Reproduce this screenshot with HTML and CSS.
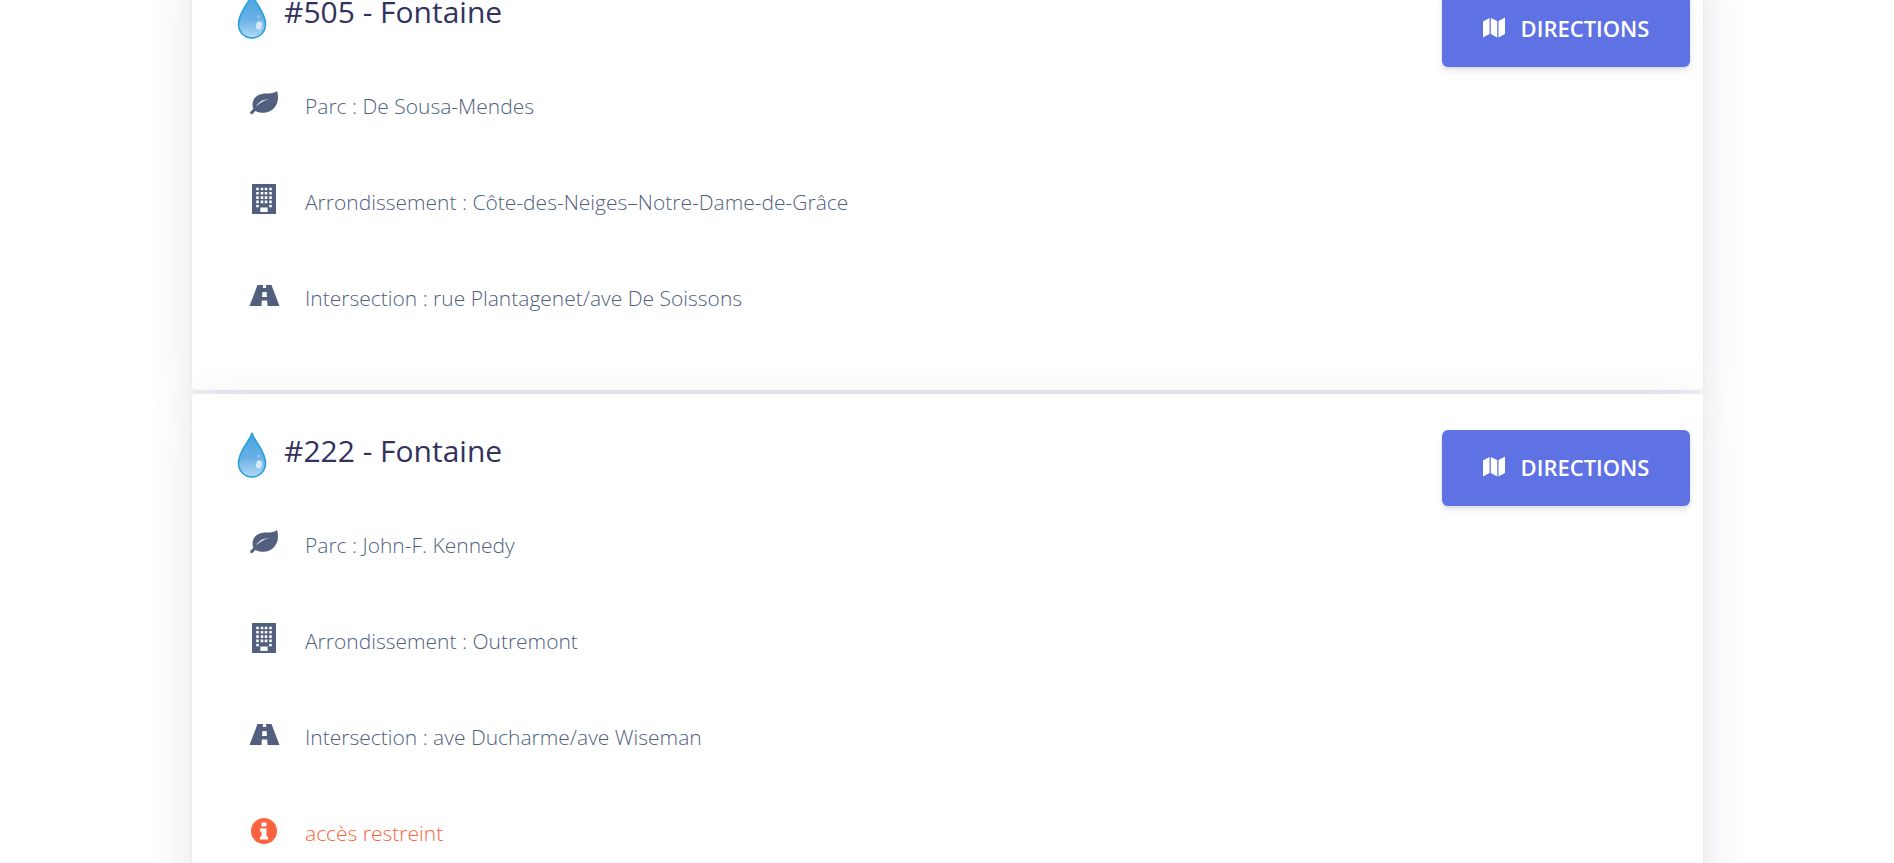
FILE: index.html
```html
<!DOCTYPE html>
<html lang="fr">
<head>
    <meta charset="UTF-8">
    <meta name="viewport" content="width=device-width, initial-scale=1.0">
    <title>Fontaines</title>
    <link rel="stylesheet" href="styles.css">
</head>
<body>
    <svg class="sprites" width="0" height="0">
        <defs>
            <linearGradient id="dropFill" x1="0" y1="0" x2="0" y2="1">
                <stop offset="0" stop-color="#4aa3df"/>
                <stop offset="0.55" stop-color="#66b0e6"/>
                <stop offset="1" stop-color="#b5d8f3"/>
            </linearGradient>
            <symbol id="icon-drop" viewBox="0 0 30 46">
                <path d="M15 1C13 9 1.500 19 1.500 31C1.500 39 7.500 45 15 45C22.500 45 28.500 39 28.500 31C28.500 19 17 9 15 1Z" fill="url(#dropFill)" stroke="#27a0dc" stroke-width="1.600"/>
                <ellipse cx="22" cy="32.500" rx="3" ry="4.200" fill="#d4e9f8" transform="rotate(15 22 32.500)"/>
                <circle cx="21.500" cy="24" r="1.700" fill="#8cc3ec"/>
            </symbol>
            <symbol id="icon-leaf" viewBox="0 0 28 24">
                <path fill-rule="evenodd" d="M27 0C25 2 21 2.500 16 2.500C8 2.500 2.500 7 2.500 13.500C2.500 15.200 2.800 16.500 3.400 17.800L0.500 20.800C-0.600 22.200 1 23.900 2.400 22.900L5.500 20C7.500 21.200 10 21.800 13 21.800C22.500 21.800 28 14.500 28 6.500C28 4 27.600 2 27 0ZM6.200 15.500C8.500 10.800 13 8.300 19.500 8C14.500 9.200 10 11.500 6.200 15.500Z"/>
            </symbol>
            <symbol id="icon-building" viewBox="0 0 24 30">
                <path fill-rule="evenodd" d="M0 0H24V30H0ZM4.200 3.700h2.600v2.600h-2.600zM8.700 3.700h2.600v2.600h-2.600zM12.700 3.700h2.600v2.600h-2.600zM17.200 3.700h2.600v2.600h-2.600zM4.200 8h2.600v2.600h-2.600zM8.700 8h2.600v2.600h-2.600zM12.700 8h2.600v2.600h-2.600zM17.200 8h2.600v2.600h-2.600zM4.200 12.300h2.600v2.600h-2.600zM8.700 12.300h2.600v2.600h-2.600zM12.700 12.300h2.600v2.600h-2.600zM17.200 12.300h2.600v2.600h-2.600zM4.200 16.600h2.600v2.600h-2.600zM8.700 16.600h2.600v2.600h-2.600zM12.700 16.600h2.600v2.600h-2.600zM17.200 16.600h2.600v2.600h-2.600zM4.200 20.900h2.600v2.400h-2.600zM17.200 20.900h2.600v2.400h-2.600zM8.300 23.500h7.400v4.500h-7.400z"/>
            </symbol>
            <symbol id="icon-road" viewBox="0 0 30 21">
                <path fill-rule="evenodd" d="M8 0H13.500L13.300 3H16.700L16.500 0H22L30 21H18L17.700 15.500H12.300L12 21H0ZM12.900 7L12.600 12H17.400L17.100 7Z"/>
            </symbol>
            <symbol id="icon-info" viewBox="0 0 26 26">
                <path fill-rule="evenodd" d="M13 0A13 13 0 1 1 13 26A13 13 0 1 1 13 0ZM10.500 4.500V8.500H15.500V4.500ZM9 10.500V13.500H10.500V18.500H9V21.500H17V18.500H15.500V10.500Z"/>
            </symbol>
            <symbol id="icon-map" viewBox="0 0 22 21">
                <path d="M0 4.500L6.500 1V17L0 20.500ZM7.800 1L14.200 4V20.500L7.800 17ZM15.500 4L22 0.500V17L15.500 20.500Z"/>
            </symbol>
        </defs>
    </svg>

    <main class="fountain-list">
        <section class="card">
            <a class="btn-directions" href="#"><svg class="icon-map"><use href="#icon-map"/></svg>DIRECTIONS</a>
            <h2 class="card-title"><svg class="icon-drop"><use href="#icon-drop"/></svg>#505 - Fontaine</h2>
            <div class="info-row">
                <span class="info-icon"><svg class="icon-leaf"><use href="#icon-leaf"/></svg></span>
                <span>Parc : De Sousa-Mendes</span>
            </div>
            <div class="info-row">
                <span class="info-icon"><svg class="icon-building"><use href="#icon-building"/></svg></span>
                <span>Arrondissement : Côte-des-Neiges–Notre-Dame-de-Grâce</span>
            </div>
            <div class="info-row">
                <span class="info-icon"><svg class="icon-road"><use href="#icon-road"/></svg></span>
                <span>Intersection : rue Plantagenet/ave De Soissons</span>
            </div>
        </section>

        <section class="card">
            <a class="btn-directions" href="#"><svg class="icon-map"><use href="#icon-map"/></svg>DIRECTIONS</a>
            <h2 class="card-title"><svg class="icon-drop"><use href="#icon-drop"/></svg>#222 - Fontaine</h2>
            <div class="info-row">
                <span class="info-icon"><svg class="icon-leaf"><use href="#icon-leaf"/></svg></span>
                <span>Parc : John-F. Kennedy</span>
            </div>
            <div class="info-row">
                <span class="info-icon"><svg class="icon-building"><use href="#icon-building"/></svg></span>
                <span>Arrondissement : Outremont</span>
            </div>
            <div class="info-row">
                <span class="info-icon"><svg class="icon-road"><use href="#icon-road"/></svg></span>
                <span>Intersection : ave Ducharme/ave Wiseman</span>
            </div>
            <div class="info-row info-warning">
                <span class="info-icon"><svg class="icon-info"><use href="#icon-info"/></svg></span>
                <span>accès restreint</span>
            </div>
        </section>
    </main>
</body>
</html>
```
FILE: styles.css
```css
html, body {
    height: 100%;
    overflow: hidden;
}

body {
    margin: 0;
    font-family: "Open Sans", sans-serif;
    background-color: #fff;
    color: #525f7f;
}

.sprites {
    position: absolute;
}

.fountain-list {
    width: 1511px;
    margin: -45px 0 0 192px;
}

.card {
    position: relative;
    height: 435px;
    box-sizing: border-box;
    margin-bottom: 4px;
    padding: 36px 13px 0 47px;
    background-color: #fff;
    border-radius: 4px;
    box-shadow: 0 15px 48px rgba(50, 50, 93, 0.13), 0 1px 4px rgba(0, 0, 0, 0.05);
}

.card:last-child {
    height: auto;
    padding-bottom: 44px;
}

.btn-directions {
    float: right;
    display: flex;
    align-items: center;
    justify-content: center;
    width: 248px;
    height: 76px;
    padding-bottom: 3px;
    box-sizing: border-box;
    background-color: #5e72e4;
    border-radius: 6px;
    box-shadow: 0 4px 6px rgba(50, 50, 93, 0.11), 0 1px 3px rgba(0, 0, 0, 0.08);
    color: #fff;
    font-size: 22px;
    font-weight: 600;
    text-decoration: none;
}

.icon-map {
    width: 22px;
    height: 21px;
    margin-right: 16px;
    fill: #fff;
}

.card-title {
    display: flex;
    align-items: center;
    height: 40px;
    margin: 0 0 27px;
    color: #32325d;
    font-size: 30px;
    font-weight: 400;
}

.icon-drop {
    width: 30px;
    height: 46px;
    margin: 9px 17px 0 -2px;
}

.info-row {
    display: flex;
    align-items: center;
    height: 96px;
    font-size: 21px;
    font-weight: 300;
}

.info-icon {
    display: flex;
    justify-content: center;
    width: 50px;
    margin: 0 16px 6px 0;
    fill: #525f7f;
}

.icon-leaf {
    width: 28px;
    height: 24px;
    margin-bottom: 1px;
}

.icon-building {
    width: 24px;
    height: 30px;
}

.icon-road {
    width: 31px;
    height: 21px;
}

.icon-info {
    width: 26px;
    height: 26px;
    margin-top: 1px;
}

.info-warning {
    color: #fb6340;
}

.info-warning .info-icon {
    fill: #fb6340;
}
```
